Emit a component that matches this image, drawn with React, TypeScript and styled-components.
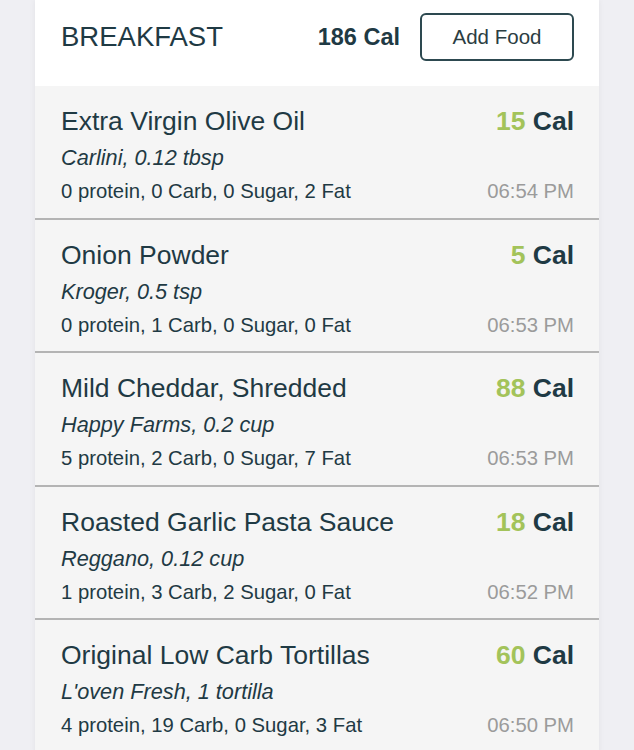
import React from "react";
import styled, { createGlobalStyle } from "styled-components";

const GlobalStyle = createGlobalStyle`
  html, body {
    margin: 0;
    padding: 0;
    background: #efeff3;
  }
  body {
    font-family: "Liberation Sans", Arial, sans-serif;
    -webkit-font-smoothing: antialiased;
  }
`;

const Page = styled.div`
  padding: 0 35px;
  min-height: 750px;
`;

const Card = styled.section`
  background: #f5f5f5;
  box-shadow: 0 0 6px rgba(0, 0, 0, 0.06);
`;

const Header = styled.header`
  display: flex;
  align-items: center;
  background: #ffffff;
  padding: 13px 25px 25px 26px;
`;

const MealTitle = styled.h2`
  flex: 1;
  margin: 0;
  font-size: 27.5px;
  font-weight: 400;
  color: #1f3a44;
  line-height: 32px;
`;

const MealTotal = styled.span`
  font-size: 23.5px;
  font-weight: 700;
  color: #1f3a44;
  margin-right: 20px;
`;

const AddButton = styled.button`
  width: 154px;
  height: 48px;
  border: 2px solid #2d4950;
  border-radius: 6px;
  background: #ffffff;
  color: #2b3d42;
  font-family: "Liberation Sans", Arial, sans-serif;
  font-size: 20.5px;
  padding: 0;
  cursor: pointer;
`;

const Row = styled.div`
  display: grid;
  grid-template-columns: 1fr auto;
  align-items: start;
  padding: 20px 25px 12.5px 26px;
  border-bottom: 2px solid #b4b4b4;
  background: #f5f5f5;
`;

const FoodName = styled.div`
  font-size: 26.5px;
  line-height: 30px;
  color: #1f3a44;
  white-space: nowrap;
`;

const Calories = styled.div`
  font-size: 26.5px;
  line-height: 30px;
  font-weight: 700;
  color: #1f3a44;
  text-align: right;
  white-space: nowrap;
`;

const CalNum = styled.span`
  color: #a3c35a;
`;

const Brand = styled.div`
  grid-column: 1 / span 2;
  margin-top: 8px;
  font-size: 21.7px;
  line-height: 28px;
  font-style: italic;
  color: #1f3a44;
`;

const Macros = styled.div`
  margin-top: 5px;
  font-size: 20.3px;
  line-height: 28px;
  color: #1f3a44;
  white-space: nowrap;
`;

const Time = styled.div`
  margin-top: 5px;
  font-size: 20.3px;
  line-height: 28px;
  color: #9b9b9b;
  text-align: right;
`;

type Food = {
  name: string;
  brand: string;
  cal: number;
  protein: number;
  carb: number;
  sugar: number;
  fat: number;
  time: string;
};

const foods: Food[] = [
  { name: "Extra Virgin Olive Oil", brand: "Carlini, 0.12 tbsp", cal: 15, protein: 0, carb: 0, sugar: 0, fat: 2, time: "06:54 PM" },
  { name: "Onion Powder", brand: "Kroger, 0.5 tsp", cal: 5, protein: 0, carb: 1, sugar: 0, fat: 0, time: "06:53 PM" },
  { name: "Mild Cheddar, Shredded", brand: "Happy Farms, 0.2 cup", cal: 88, protein: 5, carb: 2, sugar: 0, fat: 7, time: "06:53 PM" },
  { name: "Roasted Garlic Pasta Sauce", brand: "Reggano, 0.12 cup", cal: 18, protein: 1, carb: 3, sugar: 2, fat: 0, time: "06:52 PM" },
  { name: "Original Low Carb Tortillas", brand: "L'oven Fresh, 1 tortilla", cal: 60, protein: 4, carb: 19, sugar: 0, fat: 3, time: "06:50 PM" },
];

export default function App() {
  return (
    <>
      <GlobalStyle />
      <Page>
        <Card>
          <Header>
            <MealTitle>BREAKFAST</MealTitle>
            <MealTotal>186 Cal</MealTotal>
            <AddButton>Add Food</AddButton>
          </Header>
          {foods.map((f) => (
            <Row key={f.name}>
              <FoodName>{f.name}</FoodName>
              <Calories>
                <CalNum>{f.cal}</CalNum> Cal
              </Calories>
              <Brand>{f.brand}</Brand>
              <Macros>
                {f.protein} protein, {f.carb} Carb, {f.sugar} Sugar, {f.fat} Fat
              </Macros>
              <Time>{f.time}</Time>
            </Row>
          ))}
        </Card>
      </Page>
    </>
  );
}
